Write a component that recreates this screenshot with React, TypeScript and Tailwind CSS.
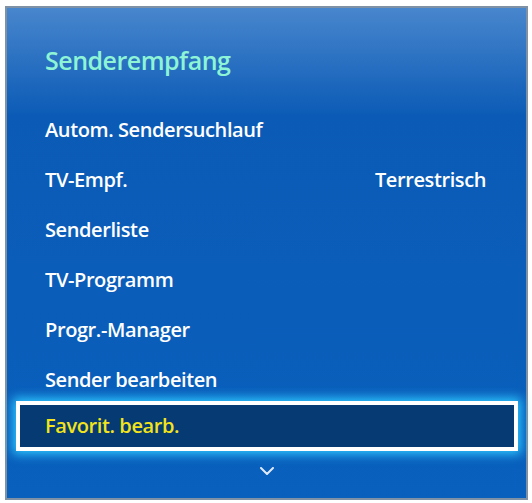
const items: { label: string; value?: string }[] = [
  { label: 'Autom. Sendersuchlauf' },
  { label: 'TV-Empf.', value: 'Terrestrisch' },
  { label: 'Senderliste' },
  { label: 'TV-Programm' },
  { label: 'Progr.-Manager' },
  { label: 'Sender bearbeiten' },
]

export default function App() {
  return (
    <div className="w-[532px] h-[503px] bg-white pt-[6px] pl-[5px] font-['Open_Sans',sans-serif]">
      <div className="w-[523px] h-[494px] border-2 border-[#7f91a4] bg-[linear-gradient(to_bottom,#4886cd_0%,#0b5bb6_22%,#0960bd_100%)] flex flex-col">
        {/* Title */}
        <div className="h-[97px] pl-[38px] pt-[37px]">
          <h1 className="text-[25px] leading-[30px] font-semibold text-[#8ef4d6] tracking-[-0.5px]">
            Senderempfang
          </h1>
        </div>

        {/* Items */}
        {items.map((it) => (
          <div key={it.label} className="h-[50px] flex items-center justify-between pl-[38px] pr-[40px]">
            <span className="text-[20px] font-semibold text-white tracking-[-0.4px]">{it.label}</span>
            {it.value && (
              <span className="text-[20px] font-semibold text-white tracking-[-0.4px]">{it.value}</span>
            )}
          </div>
        ))}

        {/* Selected item */}
        <div className="ml-[9px] mr-[8px] mt-[-4px] h-[50px] border-4 border-white bg-[#053a72] shadow-[0_0_10px_3px_#2ec8ff] flex items-center pl-[25px]">
          <span className="text-[20px] font-semibold text-[#f2e31c] tracking-[-0.4px]">Favorit. bearb.</span>
        </div>

        {/* Down arrow */}
        <div className="flex justify-center pt-[16px]">
          <svg width="14" height="8" viewBox="0 0 14 8" fill="none" stroke="#dfe9f7" strokeWidth="2" strokeLinecap="round" strokeLinejoin="round">
            <polyline points="1,1 7,7 13,1" />
          </svg>
        </div>
      </div>
    </div>
  )
}
